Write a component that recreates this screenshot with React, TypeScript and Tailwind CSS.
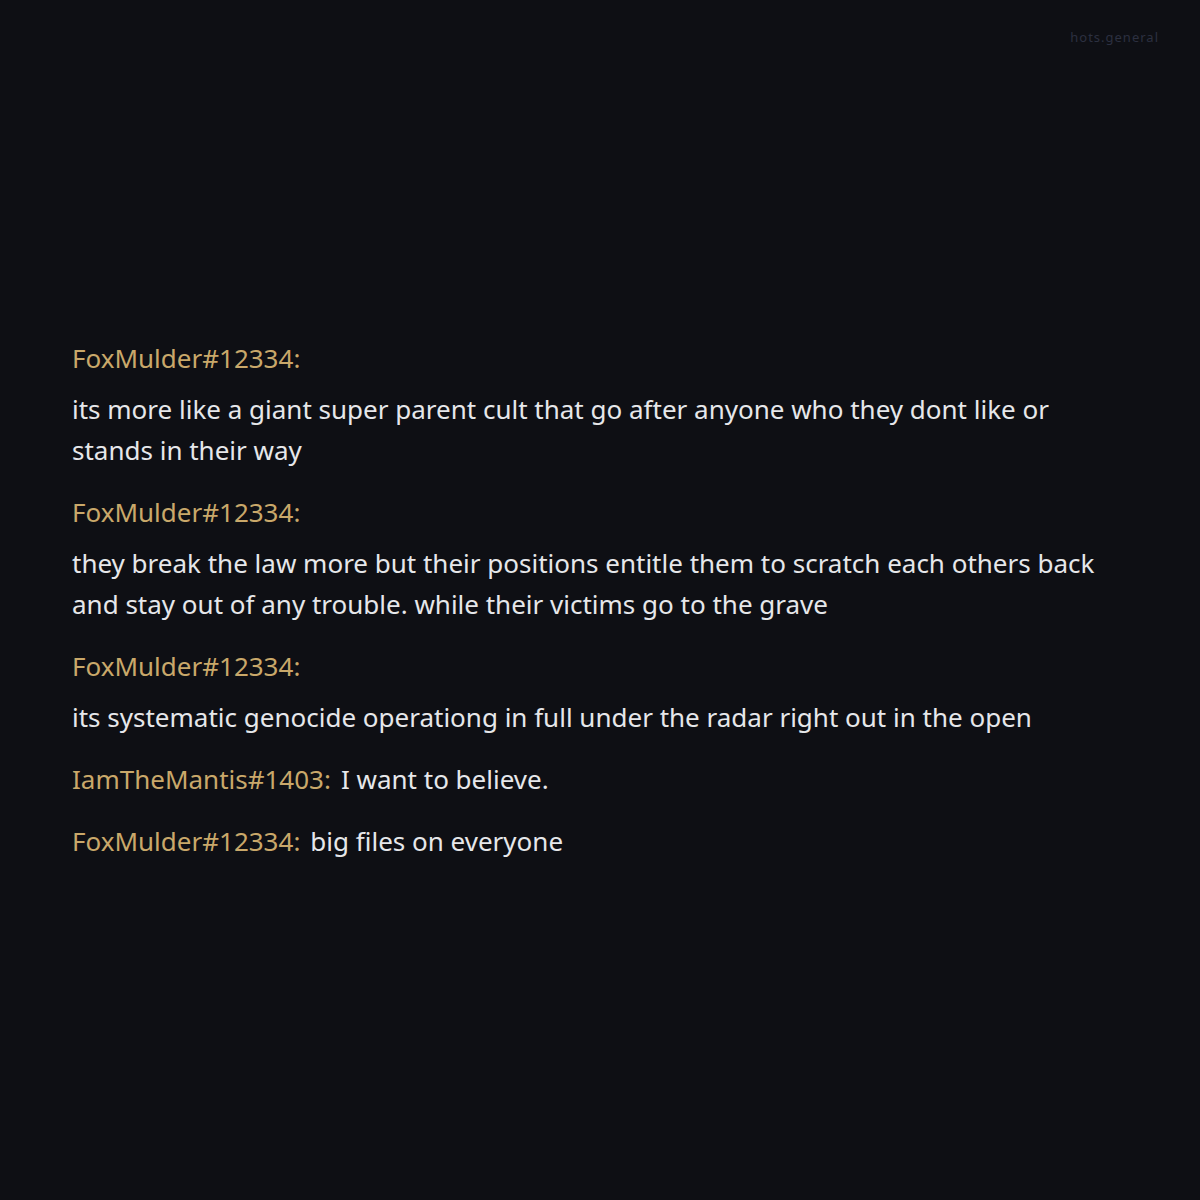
const messages = [
    {user: "FoxMulder#12334", text: "its more like a giant super parent cult that go after anyone who they dont like or stands in their way"},
    {user: "FoxMulder#12334", text: "they break the law more but their positions entitle them to scratch each others back and stay out of any trouble. while their victims go to the grave"},
    {user: "FoxMulder#12334", text: "its systematic genocide operationg in full under the radar right out in the open"},
    {user: "IamTheMantis#1403", text: "I want to believe."},
    {user: "FoxMulder#12334", text: "big files on everyone"},
]

const App = () => {
    return (
        <div className="w-[1200px] h-[1200px] bg-[#0e0f14] relative flex flex-col justify-center px-[72px]"
             style={{fontFamily: '"Noto Sans", sans-serif'}}>
            <div className="absolute top-[28px] right-[41px] text-[13px] tracking-[1px] text-[#2c3040]">
                hots.general
            </div>

            <div className="flex flex-col gap-[21px] text-[26px] leading-[41px]">
                {messages.map((msg, i) => (
                    <div key={i} className="flex flex-wrap gap-x-[10px] gap-y-[10px]">
                        <span className="text-[#c9a86a]">{msg.user}:</span>
                        <span className="text-[#e6e7ea]">{msg.text}</span>
                    </div>
                ))}
            </div>
        </div>
    );
};

export default App;
